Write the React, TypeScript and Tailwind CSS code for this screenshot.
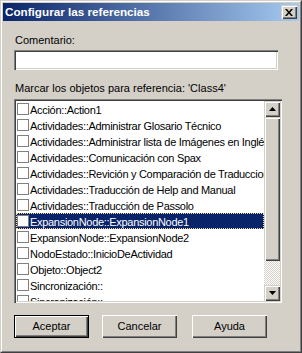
import React from "react";

const items = [
  "Acción::Action1",
  "Actividades::Administrar Glosario Técnico",
  "Actividades::Administrar lista de Imágenes en Inglés",
  "Actividades::Comunicación con Spax",
  "Actividades::Revición y Comparación de Traducciones",
  "Actividades::Traducción de Help and Manual",
  "Actividades::Traducción de Passolo",
  "ExpansionNode::ExpansionNode1",
  "ExpansionNode::ExpansionNode2",
  "NodoEstado::InicioDeActividad",
  "Objeto::Object2",
  "Sincronización::",
  "Sincronización::",
];

const raised =
  "bg-[#d4d0c8] shadow-[inset_1px_1px_#d4d0c8,inset_2px_2px_#ffffff,inset_-1px_-1px_#404040,inset_-2px_-2px_#808080]";
const btn =
  "bg-[#d4d0c8] shadow-[inset_1px_1px_#ffffff,inset_-1px_-1px_#404040,inset_-2px_-2px_#808080]";
const sunken =
  "shadow-[inset_1px_1px_#808080,inset_2px_2px_#404040,inset_-1px_-1px_#ffffff,inset_-2px_-2px_#d4d0c8]";

export default function App() {
  return (
    <div className="w-[302px] h-[353px] bg-[#d4d0c8] border border-t-[#d4d0c8] border-l-[#d4d0c8] border-r-[#404040] border-b-[#404040] font-['Liberation_Sans',Arial,sans-serif] text-[11px] text-black">
      <div className="h-full border border-t-white border-l-white border-r-[#808080] border-b-[#808080] p-px flex flex-col">
        {/* Title bar */}
        <div className="h-[18px] flex items-center justify-between bg-[linear-gradient(to_right,#0a246a,#a6caf0)] pl-[2px] pr-[2px]">
          <span className="text-white font-bold text-[11.7px] leading-[18px]">
            Configurar las referencias
          </span>
          <div className={`w-[16px] h-[14px] flex items-center justify-center ${raised}`}>
            <svg width="8" height="7" viewBox="0 0 8 7">
              <path d="M0 0h2l2 2.5L6 0h2L5 3.5 8 7H6L4 4.5 2 7H0l3-3.5z" fill="#000" />
            </svg>
          </div>
        </div>

        <div className="pl-[11px] flex flex-col">
          <div className="mt-[13px] leading-[13px] pl-px">Comentario:</div>
          <div className={`mt-[3px] w-[264px] h-[20px] bg-white ${sunken}`} />
          <div className="mt-[12px] leading-[13px] pl-px">
            Marcar los objetos para referencia: 'Class4'
          </div>

          {/* List box */}
          <div className={`mt-[4px] w-[268px] h-[204px] bg-white p-[2px] flex ${sunken}`}>
            <div className="flex-1 overflow-hidden flex flex-col">
              {items.map((t, i) => {
                const sel = i === 7;
                return (
                  <div
                    key={i}
                    className={`h-[16px] shrink-0 flex items-center whitespace-nowrap ${
                      sel
                        ? "bg-[#0a246a] text-white outline outline-1 outline-dotted outline-[#f5db95] -outline-offset-1"
                        : ""
                    }`}
                  >
                    <div className="ml-[1px] w-[12px] h-[12px] shrink-0 bg-white border border-[#808080]" />
                    <span className="ml-[1px] leading-[16px] pt-px tracking-[-0.3px]">{t}</span>
                  </div>
                );
              })}
            </div>
            {/* Scrollbar */}
            <div className="w-[16px] flex flex-col">
              <div className={`h-[16px] flex items-center justify-center ${raised}`}>
                <svg width="7" height="4" viewBox="0 0 7 4">
                  <path d="M3.5 0L7 4H0z" fill="#000" />
                </svg>
              </div>
              <div className={`h-[144px] ${raised}`} />
              <div className="flex-1 bg-[image:repeating-conic-gradient(#d4d0c8_0%_25%,#ffffff_0%_50%)] bg-[length:2px_2px]" />
              <div className={`h-[16px] flex items-center justify-center ${raised}`}>
                <svg width="7" height="4" viewBox="0 0 7 4">
                  <path d="M0 0h7L3.5 4z" fill="#000" />
                </svg>
              </div>
            </div>
          </div>

          {/* Buttons */}
          <div className="mt-[12px] flex">
            <div className="w-[75px] h-[23px] border border-black">
              <div className={`w-full h-full flex items-center justify-center ${btn}`}>
                Aceptar
              </div>
            </div>
            <div className={`ml-[13px] w-[75px] h-[23px] flex items-center justify-center ${btn}`}>
              Cancelar
            </div>
            <div className={`ml-[15px] w-[75px] h-[23px] flex items-center justify-center ${btn}`}>
              Ayuda
            </div>
          </div>
        </div>
      </div>
    </div>
  );
}
